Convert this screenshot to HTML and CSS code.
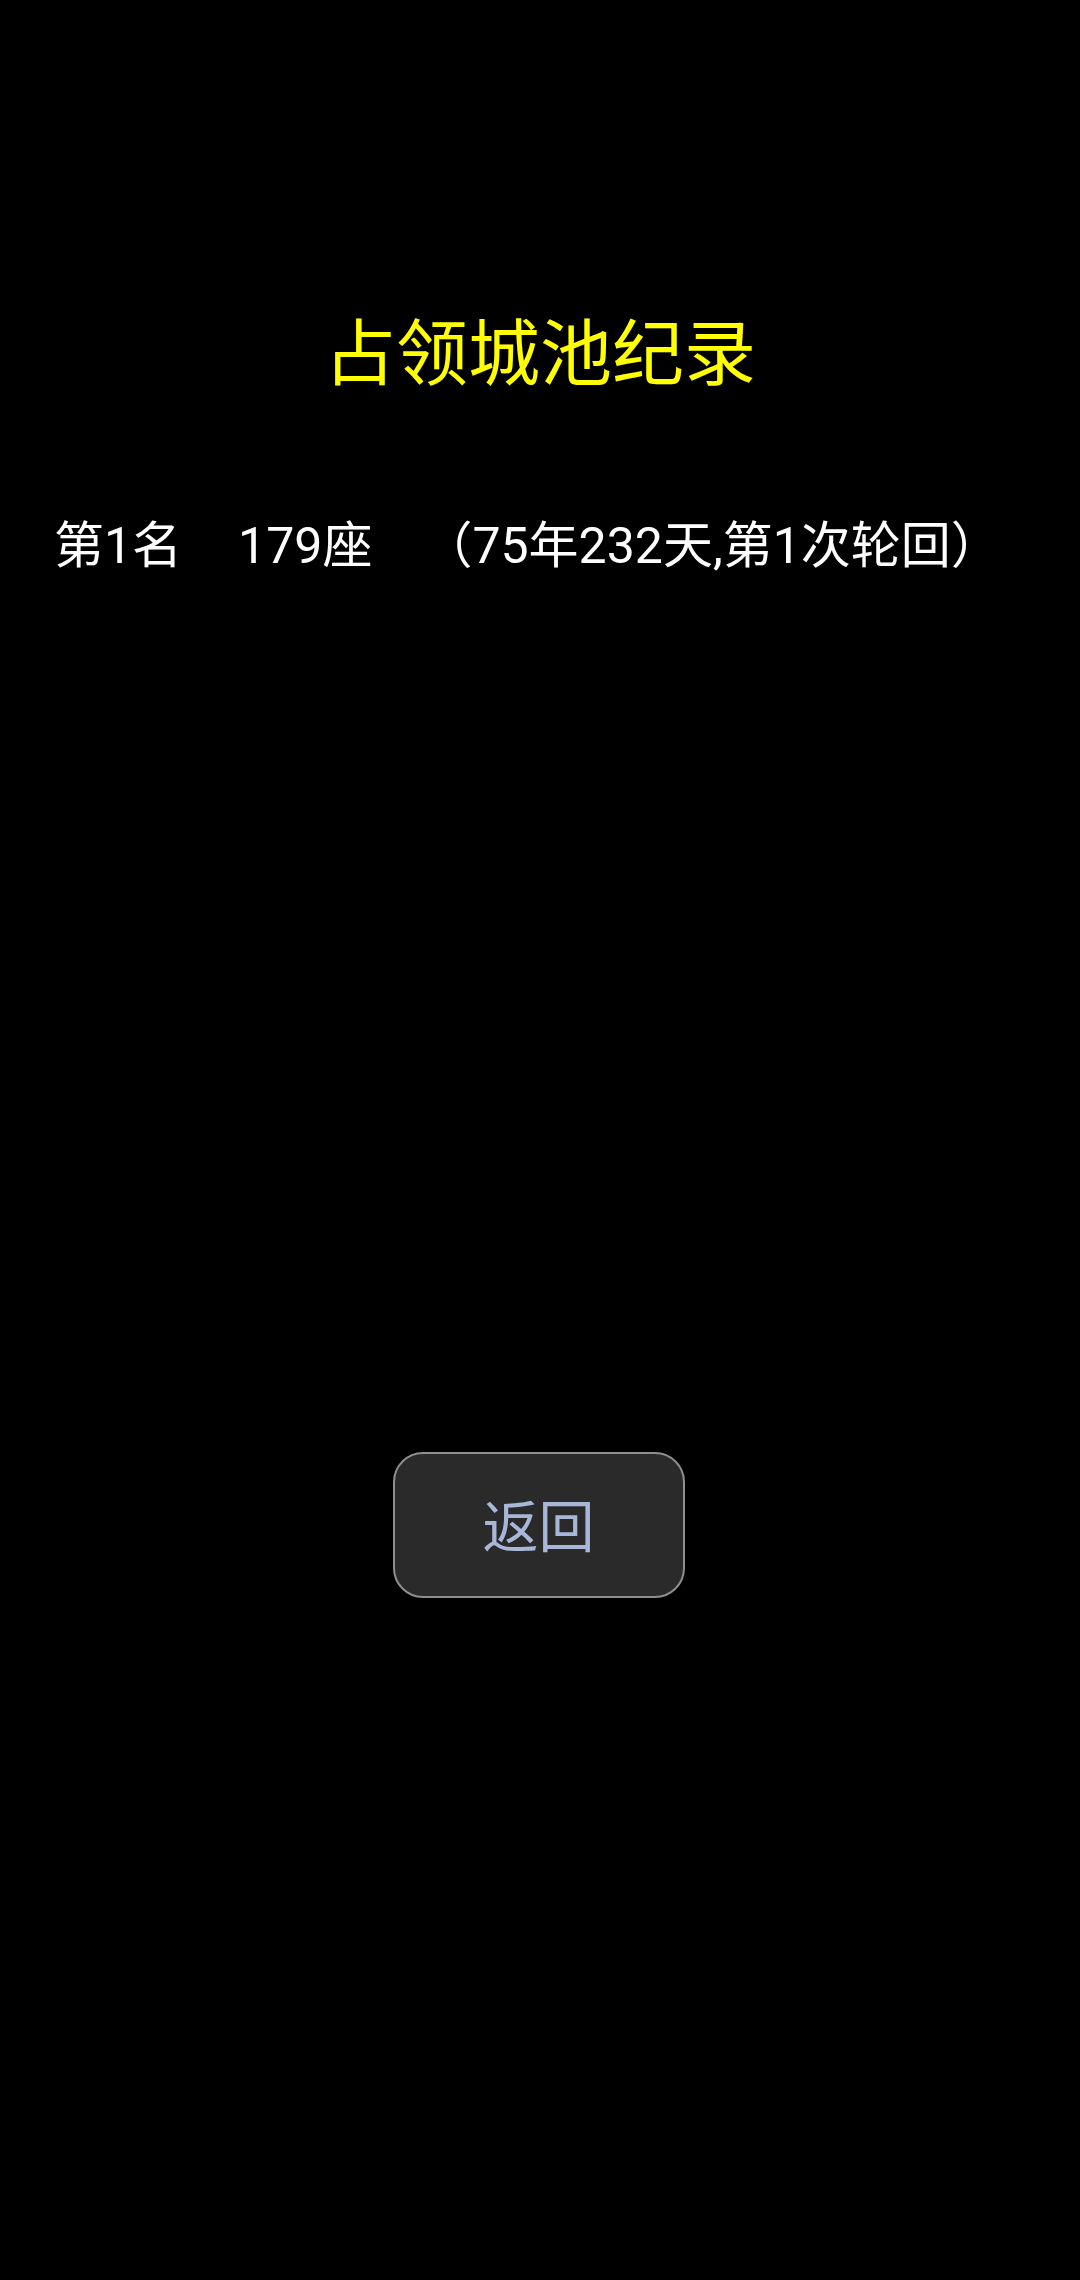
FILE: index.html
```html
<!DOCTYPE html>
<html lang="zh-CN">
<head>
<meta charset="utf-8">
<title>占领城池纪录</title>
<link rel="stylesheet" href="styles.css">
</head>
<body>
<main class="screen">
  <h1 class="title">占领城池纪录</h1>
  <ul class="records">
    <li class="record"><span class="rank">第1名</span><span class="count">179座</span><span class="detail">（75年232天,第1次轮回）</span></li>
  </ul>
  <div class="actions">
    <button class="back-btn" type="button">返回</button>
  </div>
</main>
</body>
</html>
```
FILE: styles.css
```css
html, body {
  margin: 0;
  padding: 0;
  background: #000;
}
body {
  width: 1080px;
  height: 2280px;
  font-family: Roboto, "Noto Sans CJK SC", sans-serif;
  color: #fff;
}
.screen {
  display: flex;
  flex-direction: column;
}
.title {
  margin: 312px 0 0;
  font-size: 72px;
  font-weight: normal;
  line-height: 86px;
  color: #ffff00;
  text-align: center;
}
.records {
  list-style: none;
  margin: 112px 0 0;
  padding: 0 0 0 54px;
}
.record {
  display: flex;
  font-size: 50px;
  line-height: 72px;
  white-space: nowrap;
}
.count {
  margin-left: 56px;
}
.detail {
  margin-left: 50px;
}
.actions {
  display: flex;
  justify-content: center;
  margin-top: 870px;
}
.back-btn {
  width: 292px;
  height: 146px;
  box-sizing: border-box;
  border: 2px solid #8e8e93;
  border-radius: 30px;
  background: #2a2a2a;
  color: #a8b6d8;
  font-family: Roboto, "Noto Sans CJK SC", sans-serif;
  font-size: 56px;
  padding: 0 0 6px;
  margin: 0 3px 0 0;
}
```
